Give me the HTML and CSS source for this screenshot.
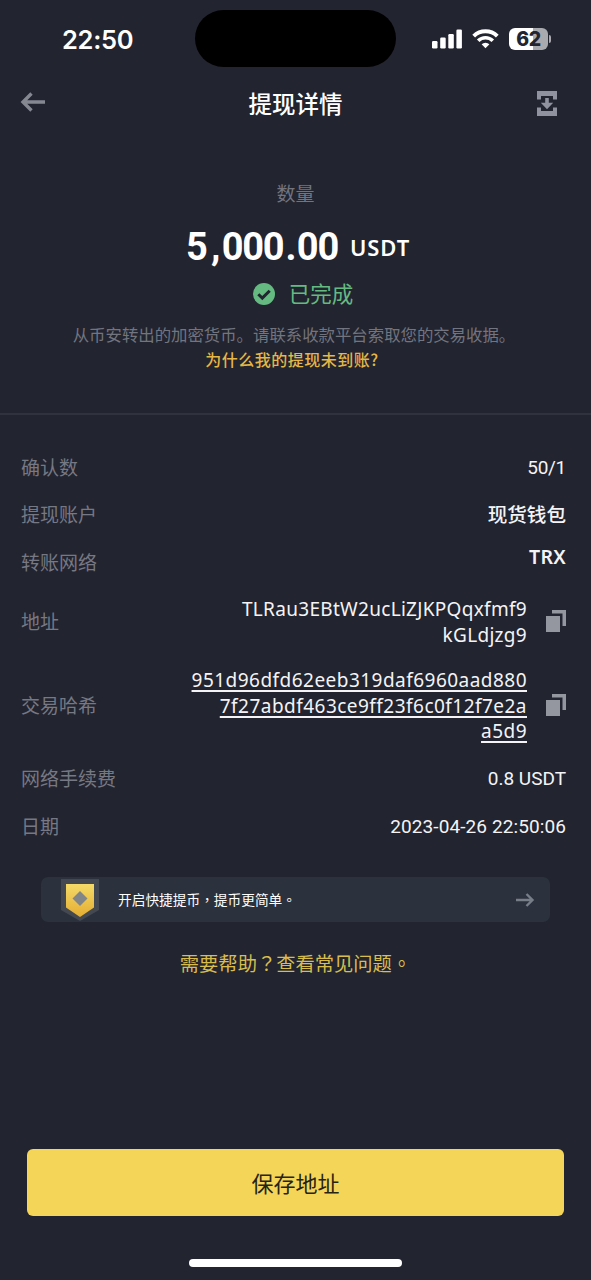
FILE: index.html
```html
<!DOCTYPE html>
<html lang="zh-CN">
<head>
<meta charset="utf-8">
<title>提现详情</title>
<link rel="stylesheet" href="styles.css">
</head>
<body>
<div class="screen">
  <div class="status">
    <div class="time">22:50</div>
    <div class="island"></div>
    <div class="indicators">
      <svg class="signal" width="31" height="20" viewBox="0 0 31 20" fill="#fff"><rect x="0" y="12" width="5.500" height="7.500" rx="1.200"/><rect x="8.200" y="8.500" width="5.500" height="11" rx="1.200"/><rect x="16.300" y="5" width="5.500" height="14.500" rx="1.200"/><rect x="24.400" y="0.500" width="5.500" height="19" rx="1.200"/></svg>
      <svg class="wifi" width="27" height="20" viewBox="0 0 27 20" fill="none" stroke="#fff"><path d="M1.700 7.100a17 17 0 0 1 23.600 0" stroke-width="4"/><path d="M6.200 11.800a10.400 10.400 0 0 1 14.600 0" stroke-width="3.600"/><path d="M13.500 19.300l-3.900-4a5.700 5.700 0 0 1 7.800 0z" fill="#fff" stroke="none"/></svg>
      <div class="battery"><span>62</span></div>
      <div class="cap"></div>
    </div>
  </div>

  <div class="nav">
    <svg width="26" height="20" viewBox="0 0 26 20" fill="none" stroke="#858891" stroke-width="3.400"><path d="M11.500 1.500L3 10l8.500 8.500M3 10h22"/></svg>
    <h1>提现详情</h1>
    <svg width="20" height="25" viewBox="0 0 20 25" fill="#9092a0"><path d="M0 0h20v8.500h-4V5H4v3.500H0zM0 16.500h4V20h12v-3.500h4V25H0zM8.200 7h3.600v4.800h4.400L10 18.200l-6.200-6.400h4.400z"/></svg>
  </div>

  <div class="summary">
    <div class="caption">数量</div>
    <div class="amount"><span class="number">5<i class="comma">,</i>000<i class="point">.</i>00</span><span class="unit">USDT</span></div>
    <div class="done">
      <svg width="22" height="22" viewBox="0 0 22 22"><circle cx="11" cy="11" r="11" fill="#65ba82"/><path d="M5.300 11.200l4 3.900 7.400-7.400" fill="none" stroke="#222430" stroke-width="3"/></svg>
      <span>已完成</span>
    </div>
    <div class="note">从币安转出的加密货币。请联系收款平台索取您的交易收据。</div>
    <div class="why">为什么我的提现未到账?</div>
  </div>

  <div class="details">
    <div class="row"><span class="label">确认数</span><span class="value din count">50/1</span></div>
    <div class="row"><span class="label">提现账户</span><span class="value wallet">现货钱包</span></div>
    <div class="row"><span class="label">转账网络</span><span class="value network">TRX</span></div>
    <div class="row address"><span class="label">地址</span><span class="value code">TLRau3EBtW2ucLiZJKPQqxfmf9<br>kGLdjzg9</span>
      <svg class="copy" width="20" height="22" viewBox="0 0 20 22" fill="#9496a0"><path d="M0 6h14v16H0zM6 0h14v16h-3.500V3.500H6z"/></svg></div>
    <div class="row hash"><span class="label">交易哈希</span><span class="value code"><u>951d96dfd62eeb319daf6960aad880</u><br><u>7f27abdf463ce9ff23f6c0f12f7e2a</u><br><u>a5d9</u></span>
      <svg class="copy" width="20" height="22" viewBox="0 0 20 22" fill="#9496a0"><path d="M0 6h14v16H0zM6 0h14v16h-3.500V3.500H6z"/></svg></div>
    <div class="row"><span class="label">网络手续费</span><span class="value din">0.8 USDT</span></div>
    <div class="row"><span class="label">日期</span><span class="value din date">2023-04-26 22:50:06</span></div>
  </div>

  <div class="banner">
    <svg class="badge" width="38" height="43" viewBox="0 0 38 43"><defs><linearGradient id="gold" x2="0" y2="1"><stop stop-color="#f5da68"/><stop offset="1" stop-color="#e4ad32"/></linearGradient></defs><path d="M0 1h38v31L19 43 0 32z" fill="#444951"/><path d="M5 6h28v23.500L19 39 5 29.500z" fill="url(#gold)"/><path d="M19 13l7.500 7.500L19 28l-7.500-7.500z" fill="#828587"/></svg>
    <span class="tip" lang="zh-TW">开启快捷提币，提币更简单。</span>
    <svg width="19" height="14" viewBox="0 0 19 14" fill="none" stroke="#777e88" stroke-width="2.400"><path d="M0 7h17M10.500 1l6 6-6 6"/></svg>
  </div>
  <div class="help" lang="zh-TW">需要帮助？查看常见问题。</div>

  <div class="save">保存地址</div>
  <div class="home"></div>
</div>
</body>
</html>
```
FILE: styles.css
```css
* { box-sizing: border-box; }
body { margin: 0; background: #222430; }
.screen {
  width: 591px; height: 1280px; overflow: hidden;
  display: flex; flex-direction: column;
  background: #222430; color: #fff;
  font-family: "Noto Sans CJK SC", sans-serif;
  white-space: nowrap;
}
svg { display: block; flex: none; }
.status { height: 78px; flex: none; display: grid; grid-template-columns: 195px 201px 195px; }
.time { padding-left: 62px; padding-top: 24px; font: 600 25.500px/31px Inter, sans-serif; letter-spacing: -.3px; }
.island { margin-top: 10px; height: 57px; border-radius: 29px; background: #000; }
.indicators { display: flex; align-items: center; height: 78px; padding-left: 36px; }
.wifi { margin-left: 9px; }
.battery {
  margin-left: 10px; width: 39px; height: 22px; border-radius: 6px;
  background: linear-gradient(90deg, #fff 62%, #a9aaaf 62%);
  color: #222430; text-align: center; font: 800 19.500px/22px Inter, sans-serif; letter-spacing: -.3px;
}
.cap { width: 2px; height: 8px; margin-left: 1px; border-radius: 0 3px 3px 0; background: #a9aaaf; }
.nav { height: 52px; flex: none; display: flex; align-items: center; justify-content: space-between; padding: 0 34px 4px 20px; }
.nav h1 { margin: 2px 0 0 8px; font-size: 23.500px; line-height: 34px; font-weight: 500; }
.nav svg:last-child { margin-top: 3px; }
.summary { height: 285px; flex: none; display: flex; flex-direction: column; align-items: center; padding-top: 49px; border-bottom: 2px solid #30333e; }
.caption { font-size: 19px; line-height: 28px; color: #72747f; }
.amount { height: 52px; margin-top: 14px; padding-left: 5px; display: flex; align-items: center; gap: 12px; line-height: 52px; }
.number { font-family: Roboto, sans-serif; font-size: 38px; font-weight: 700; letter-spacing: -1.200px; }
.number i { font-style: normal; }
.comma { padding: 0 2.500px 0 4.500px; }
.point { padding: 0 1.500px 0 2px; }
.unit { font-family: "Noto Sans", sans-serif; font-size: 22px; font-weight: 600; letter-spacing: .9px; }
.done { display: flex; align-items: center; gap: 14px; padding-left: 15px; height: 36px; margin-top: 3px; font-size: 21.500px; line-height: 32px; color: #65ba82; }
.done span { margin-top: -3px; }
.note { font-size: 16.400px; line-height: 24px; margin-top: 10px; color: #72747f; margin-left: -3px; }
.why { font-size: 16px; line-height: 24px; margin-top: 1px; margin-left: -7px; font-weight: 500; color: #e5b745; letter-spacing: .5px; }
.details { padding: 28px 25px 0 21px; flex: none; height: 435px; }
.row { height: 48px; display: flex; align-items: center; line-height: 25.400px; }
.row:nth-child(2) { height: 47px; }
.label { font-size: 19px; color: #767883; padding-bottom: 1px; }
.value { margin-left: auto; text-align: right; color: #f4f4f6; }
.din { font-family: Roboto, sans-serif; font-size: 19px; font-weight: 400; padding-top: 1px; }
.count { letter-spacing: -.3px; }
.date { letter-spacing: .1px; }
.wallet { font-size: 19.600px; font-weight: 500; padding-bottom: 2px; }
.network { font: 600 19.500px/26px "Noto Sans", sans-serif; letter-spacing: .3px; padding-bottom: 11px; }
.address { height: 71px; }
.hash { height: 97px; }
.code { font-family: "Noto Sans", sans-serif; font-size: 19px; letter-spacing: .47px; padding-top: 2px; }
.address .code { letter-spacing: .3px; }
.code u { text-underline-offset: 3px; text-decoration-thickness: 1.500px; text-decoration-skip-ink: none; }
.copy { margin-left: 19px; margin-top: -1px; }
.banner { height: 45px; flex: none; margin: 27px 41px 0; display: flex; align-items: center; padding: 0 15px 0 20px; border-radius: 7px; background: #2b313d; }
.tip { margin: 0 auto 0 19px; padding-bottom: 2px; font-family: "Noto Sans CJK TC", sans-serif; font-size: 13.700px; }
.help { margin-top: 26px; text-align: center; font-family: "Noto Sans CJK TC", sans-serif; font-size: 19.300px; line-height: 30px; color: #d8bd4d; }
.save { margin: auto 27px 0; height: 67px; flex: none; border-radius: 6px; background: #f5d558; color: #262417; text-align: center; font-size: 22px; line-height: 66px; }
.home { width: 213px; height: 8px; flex: none; margin: 43px auto 13px; border-radius: 4px; background: #fff; }
```
